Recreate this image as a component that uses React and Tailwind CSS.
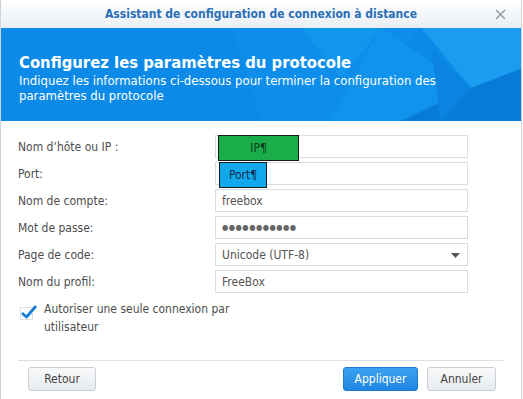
const rows = [
  { label: "Nom d’hôte ou IP :", value: "" },
  { label: "Port:", value: "" },
  { label: "Nom de compte:", value: "freebox" },
  { label: "Mot de passe:", value: "●●●●●●●●●●●", password: true },
  { label: "Page de code:", value: "Unicode (UTF-8)", select: true },
  { label: "Nom du profil:", value: "FreeBox" },
]

const Banner = () => (
  <div className="relative h-[93px] bg-[#0b8ae8] overflow-hidden">
    <svg className="absolute inset-0" width="522" height="93" viewBox="0 0 522 93">
      <polygon points="230,0 420,0 330,93 260,93" fill="#0c8eea" />
      <polygon points="420,0 522,0 522,40 470,60" fill="#1c9cef" />
      <polygon points="380,0 470,60 400,93 330,93" fill="#0f93ec" />
      <polygon points="470,60 522,40 522,93 400,93" fill="#087bd8" />
      <polygon points="300,0 380,0 340,50" fill="#1096ed" />
      <polygon points="430,20 470,60 440,93" fill="#0a84e0" />
    </svg>
    <div className="relative px-[18px] pt-[25px] text-white">
      <h1 className="text-[16.5px] leading-[20px] font-bold">Configurez les paramètres du protocole</h1>
      <p className="w-[440px] text-[13px] leading-[15px]">
        Indiquez les informations ci-dessous pour terminer la configuration des paramètres du protocole
      </p>
    </div>
  </div>
)

const Field = ({ row, index }) => (
  <div className="flex items-center h-[23px]">
    <div className="w-[197px] text-[12px] text-[#4d4d4d]">{row.label}</div>
    <div className="relative w-[253px] h-[23px] border border-[#d9dde2] bg-white flex items-center px-[6px] text-[12px] text-[#555]">
      <span className={row.password ? "text-[8px] tracking-[0.5px] text-[#666]" : ""}>{row.value}</span>
      {row.select && (
        <svg className="absolute right-[7px] top-[9px]" width="9" height="5" viewBox="0 0 9 5">
          <polygon points="0,0 9,0 4.5,5" fill="#555" />
        </svg>
      )}
      {index === 0 && (
        <div className="absolute left-[2px] top-[-1px] w-[81px] h-[26px] bg-[#1cad4b] border border-[#1a1a1a] flex items-center justify-center text-[12px] text-[#0d3b1c]">
          IP¶
        </div>
      )}
      {index === 1 && (
        <div className="absolute left-[3px] top-[-1px] w-[48px] h-[26px] bg-[#12a9ec] border border-[#1a1a1a] flex items-center justify-center text-[12px] text-[#0b2a4a]">
          Port¶
        </div>
      )}
    </div>
  </div>
)

export default function App() {
  return (
    <div
      className="w-[523px] h-[399px] bg-white overflow-hidden"
      style={{ fontFamily: '"DejaVu Sans Condensed", "DejaVu Sans", sans-serif' }}
    >
      <div className="w-[522px] h-[399px] flex flex-col border-l border-r border-[#cfd3d8]">
        {/* title bar */}
        <div className="relative h-[28px] bg-gradient-to-b from-white to-[#e9eef4] flex items-center justify-center">
          <span className="text-[12px] font-bold text-[#2a6fb6]">
            Assistant de configuration de connexion à distance
          </span>
          <svg className="absolute right-[15px] top-[9px]" width="11" height="11" viewBox="0 0 11 11">
            <path d="M1 1 L10 10 M10 1 L1 10" stroke="#9aa0a6" strokeWidth="1.6" />
          </svg>
        </div>

        <Banner />

        <div className="flex-1 pt-[14px] px-[17px]">
          <div className="flex flex-col gap-[4px]">
            {rows.map((row, i) => (
              <Field key={row.label} row={row} index={i} />
            ))}
          </div>

          <div className="flex mt-[6px] pl-[2px]">
            <div className="relative w-[13px] h-[13px] mt-[8px] border border-[#dde1e6] bg-white shrink-0">
              <svg className="absolute left-[-1px] top-[-4px]" width="18" height="16" viewBox="0 0 18 16">
                <path d="M2 9 L6.5 13 L16 2" stroke="#1b7fd4" strokeWidth="2.8" fill="none" strokeLinejoin="round" />
              </svg>
            </div>
            <div className="ml-[11px] w-[200px] text-[12px] leading-[18px] text-[#4d4d4d] pt-[1px]">
              Autoriser une seule connexion par utilisateur
            </div>
          </div>
        </div>

        <div className="mx-[17px] border-t border-[#dcdfe3] flex items-center justify-between pt-[6px] pb-[8px] pl-[10px] pr-[8px]">
          <button className="w-[68px] h-[24px] rounded-[3px] border border-[#c9ced4] bg-gradient-to-b from-[#f8f9fa] to-[#e7ebef] text-[12px] text-[#444]">
            Retour
          </button>
          <div className="flex gap-[9px]">
            <button className="w-[75px] h-[24px] rounded-[3px] border border-[#1b7bd0] bg-gradient-to-b from-[#3aa0f0] to-[#1f87e2] text-[12px] text-white">
              Appliquer
            </button>
            <button className="w-[69px] h-[24px] rounded-[3px] border border-[#c9ced4] bg-gradient-to-b from-[#f8f9fa] to-[#e7ebef] text-[12px] text-[#444]">
              Annuler
            </button>
          </div>
        </div>
      </div>
    </div>
  )
}
